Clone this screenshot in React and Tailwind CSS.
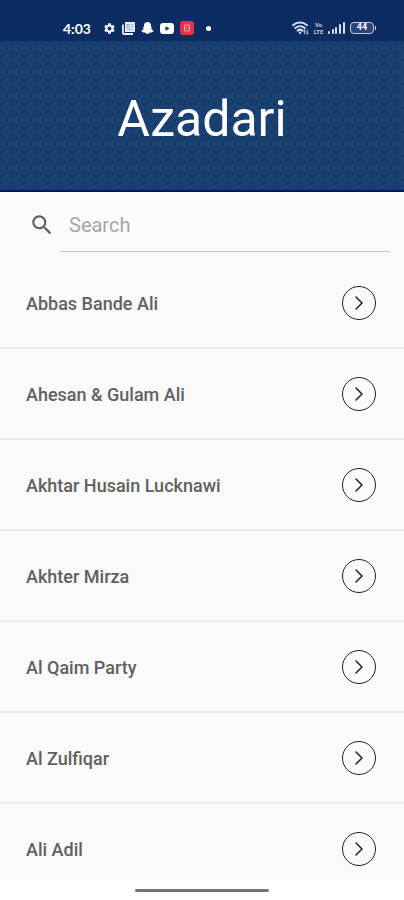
import { useState } from 'react';
import { ChevronRight } from 'lucide-react';
import { MdSearch, MdSettings } from 'react-icons/md';

const reciters = [
  'Abbas Bande Ali',
  'Ahesan & Gulam Ali',
  'Akhtar Husain Lucknawi',
  'Akhter Mirza',
  'Al Qaim Party',
  'Al Zulfiqar',
  'Ali Adil',
];

function NewsIcon() {
  return (
    <svg width="13" height="13" viewBox="0 0 13 13">
      <path d="M3 0h9a1 1 0 0 1 1 1v8a1 1 0 0 1-1 1H3z" fill="#e9eef8" />
      <path d="M1 2.5V11a1 1 0 0 0 1 1h9" fill="none" stroke="#e9eef8" strokeWidth="1.8" />
      <path d="M5 2.5h2.4v3H5zM9 2.8h2.6M9 5h2.6M5 7.6h6.6" fill="none" stroke="#7f97bf" strokeWidth="0.8" />
    </svg>
  );
}

function GhostIcon() {
  return (
    <svg width="13" height="12" viewBox="0 0 13 12">
      <path
        d="M6.5 0C8.7 0 10 1.5 10 3.5v1.7l1-.2c.5.4.1 1-.7 1.4.3 1 1.2 1.9 2.5 2.3 0 .8-.9 1-1.8 1.2-.2.6-.5.9-1.6.7-1-.1-1.7 1.4-2.9 1.4s-1.9-1.5-2.9-1.4c-1.1.2-1.4-.1-1.6-.7C1.1 9.7.2 9.5.2 8.7c1.3-.4 2.2-1.3 2.5-2.3C1.9 6 1.5 5.4 2 5l1 .2V3.5C3 1.5 4.3 0 6.5 0z"
        fill="#fff"
      />
    </svg>
  );
}

function PlayIcon() {
  return (
    <svg width="14" height="11" viewBox="0 0 14 11">
      <rect width="14" height="11" rx="3" fill="#fff" />
      <path d="M5.5 3.2v4.6l4-2.3z" fill="#0d2c61" />
    </svg>
  );
}

function RedAppIcon() {
  return (
    <svg width="14" height="14" viewBox="0 0 14 14">
      <rect width="14" height="14" rx="3" fill="#e5324d" />
      <path d="M4.5 4h5v6h-5z" fill="none" stroke="#f6a5b0" strokeWidth="0.9" />
      <path d="M4.7 8.5 7 5.8l2.3 2.7" fill="none" stroke="#f6a5b0" strokeWidth="0.9" />
    </svg>
  );
}

function WifiIcon() {
  return (
    <svg width="17" height="14" viewBox="0 0 17 14" fill="none" stroke="#d5ddec" strokeLinecap="round">
      <path d="M1 4.2c4-3.6 10-3.6 14 0" strokeWidth="2" />
      <path d="M3.3 7c2.8-2.4 6.6-2.4 9.4 0" strokeWidth="2" />
      <path d="M5.6 9.6c1.5-1.2 3.3-1.2 4.8 0" strokeWidth="2" />
      <circle cx="8" cy="11.8" r="1.2" fill="#d5ddec" stroke="none" />
      <path d="M12.4 9v4M11.4 10l1-1 1 1M15.2 9v4M14.2 12l1 1 1-1" strokeWidth="0.9" />
    </svg>
  );
}

function VolteBadge() {
  return (
    <span className="flex w-[9px] flex-col items-center text-[6px] leading-[7px] font-bold text-[#c3cee2]">
      <span>Vo</span>
      <span>LTE</span>
    </span>
  );
}

function SignalIcon() {
  return (
    <svg width="17" height="12" viewBox="0 0 17 12" fill="#d5ddec">
      <rect x="0" y="9" width="2" height="3" rx="1" />
      <rect x="4" y="7" width="2" height="5" rx="1" />
      <rect x="7" y="5" width="2" height="7" rx="1" />
      <rect x="11" y="2" width="2" height="10" rx="1" />
      <rect x="15" y="0" width="2" height="12" rx="1" />
    </svg>
  );
}

function Battery({ level }) {
  return (
    <span className="flex items-center gap-px">
      <span className="flex h-3 w-6 items-center justify-center rounded border border-[#c3cee2] bg-[#29457a] text-[9px] font-bold text-white">
        {level}
      </span>
      <span className="h-1 w-px bg-[#c3cee2]" />
    </span>
  );
}

function StatusBar() {
  return (
    <div className="flex h-[41px] shrink-0 items-end justify-between bg-[#0d2c61] pr-7 pb-1 pl-[63px]">
      <div className="flex h-[18px] items-center">
        <span className="w-10 font-['Lato',sans-serif] text-[14px] font-bold text-white">4:03</span>
        <div className="flex items-center gap-[6px]">
          <MdSettings size={13} color="#fff" />
          <NewsIcon />
          <GhostIcon />
          <PlayIcon />
          <RedAppIcon />
        </div>
        <span className="ml-3 size-[5px] rounded-full bg-white" />
      </div>
      <div className="flex h-[18px] items-center gap-[5px]">
        <WifiIcon />
        <VolteBadge />
        <SignalIcon />
        <Battery level={44} />
      </div>
    </div>
  );
}

function Header() {
  return (
    <div className="relative h-[151px] shrink-0 border-b-2 border-[#0a1560] bg-[#173f70]">
      <svg className="absolute inset-0 size-full">
        <defs>
          <pattern id="lattice" x="1" y="1" width="12" height="12" patternUnits="userSpaceOnUse">
            <path d="M0 0l12 12M12 0L0 12" stroke="#19376a" strokeWidth="2" />
            <path d="M6 2l4 4-4 4-4-4z" fill="#183b6c" stroke="#1a4776" strokeWidth="1.6" />
            <path d="M0-2l2 2-2 2M12-2l-2 2 2 2M0 10l2 2-2 2M12 10l-2 2 2 2" fill="none" stroke="#1a4373" />
          </pattern>
        </defs>
        <rect width="100%" height="100%" fill="url(#lattice)" />
      </svg>
      <h1 className="relative flex h-full items-center justify-center pt-[6px] text-[50px] leading-none text-white">
        Azadari
      </h1>
    </div>
  );
}

export default function App() {
  const [query, setQuery] = useState('');
  const visible = reciters.filter(name => name.toLowerCase().includes(query.toLowerCase()));

  return (
    <div className="flex h-screen flex-col overflow-hidden bg-[#fafafa] font-['Roboto',sans-serif]">
      <StatusBar />
      <Header />

      <div className="flex shrink-0 pt-2 pr-[14px] pb-[6px] pl-[29px]">
        <label htmlFor="search" aria-label="Search" className="flex w-[31px] items-center pb-[2px]">
          <MdSearch size={26} color="#616161" />
        </label>
        <input
          id="search"
          type="text"
          aria-label="Search"
          placeholder="Search"
          value={query}
          onChange={e => setQuery(e.target.value)}
          className="h-[52px] min-w-0 flex-1 border-b border-[#c4c4c4] px-[9px] pb-[2px] text-[20px] text-[#616161] outline-none placeholder:text-[#a6a6a6]"
        />
      </div>

      <ul className="min-h-0 flex-1 overflow-hidden">
        {visible.map(name => (
          <li key={name} className="border-b-2 border-[#ebebeb]">
            <button type="button" className="flex h-[89px] w-full items-center justify-between pr-7 pl-[26px] text-left">
              <span className="pt-[2px] text-[18px] font-medium text-[#616161]">{name}</span>
              <span className="flex size-[34px] items-center justify-center rounded-full border border-[#222]">
                <ChevronRight size={24} strokeWidth={1.5} color="#222" />
              </span>
            </button>
          </li>
        ))}
      </ul>

      <div className="flex h-5 shrink-0 items-center justify-center bg-white">
        <div className="h-[3px] w-1/3 rounded-full bg-[#757575]" />
      </div>
    </div>
  );
}
